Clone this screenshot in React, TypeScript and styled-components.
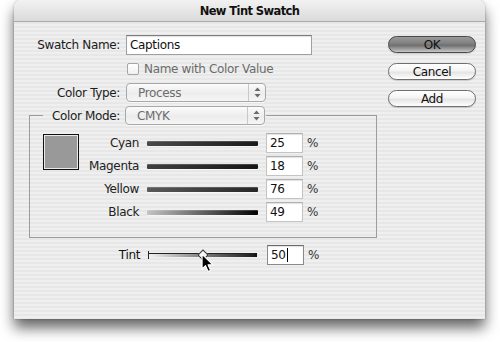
import * as React from 'react';
import styled, { createGlobalStyle } from 'styled-components';

const GlobalStyle = createGlobalStyle`
	html, body {
		margin: 0;
		padding: 0;
		background: #fff;
	}
	body {
		font-family: "DejaVu Sans", "Liberation Sans", sans-serif;
		font-size: 12px;
		letter-spacing: -0.35px;
		color: #1c1c1c;
	}
`;

interface IInk {
	$ink: number;
}

const inks = [
	{ name: 'Cyan', value: 25, from: '#4a4a4a', to: '#1a1a1a' },
	{ name: 'Magenta', value: 18, from: '#404040', to: '#161616' },
	{ name: 'Yellow', value: 76, from: '#5a5a5a', to: '#262626' },
	{ name: 'Black', value: 49, from: '#c4c4c4', to: '#000' },
];

export default function App() {
	const tint = 50;

	return (
		<Page>
			<GlobalStyle />
			<Window>
				<TitleBar>New Tint Swatch</TitleBar>
				<Body>
					<Form>
						<TopGrid>
							<Label>Swatch Name:</Label>
							<TextField>Captions</TextField>
							<span />
							<CheckRow>
								<CheckBox />
								<Dim>Name with Color Value</Dim>
							</CheckRow>
							<Label>Color Type:</Label>
							<Popup>
								<PopupText>Process</PopupText>
								<Stepper><Arrows /></Stepper>
							</Popup>
						</TopGrid>
						<Group>
							<Legend>
								<LegendLabel>Color Mode:</LegendLabel>
								<Popup>
									<PopupText>CMYK</PopupText>
									<Stepper><Arrows /></Stepper>
								</Popup>
							</Legend>
							<GroupInner>
								<Swatch />
								<SliderGrid>
									{inks.map((ink, i) => (
										<React.Fragment key={ink.name}>
											<RowLabel>{ink.name}</RowLabel>
											<InkTrack $from={ink.from} $to={ink.to} $ink={i} />
											<NumField>{ink.value}</NumField>
											<Percent>%</Percent>
										</React.Fragment>
									))}
								</SliderGrid>
							</GroupInner>
						</Group>
						<TintGrid>
							<RowLabel>Tint</RowLabel>
							<TintTrackWrap>
								<TintTrack />
								<Thumb style={{ left: `${tint}%` }} />
								<Cursor style={{ left: `${tint}%` }} viewBox="0 0 12 18" width="13" height="20">
									<path d="M1 1 L1 14.5 L4.2 11.4 L6.6 16.8 L8.8 15.8 L6.5 10.6 L10.8 10.6 Z" fill="#000" stroke="#fff" strokeWidth="1" strokeLinejoin="round" />
								</Cursor>
							</TintTrackWrap>
							<NumField $active>{tint}<Caret /></NumField>
							<Percent>%</Percent>
						</TintGrid>
					</Form>
					<Buttons>
						<PushButton $default>OK</PushButton>
						<PushButton>Cancel</PushButton>
						<PushButton>Add</PushButton>
					</Buttons>
				</Body>
			</Window>
		</Page>
	);
}

function Arrows() {
	return (
		<svg width="7" height="11" viewBox="0 0 7 11">
			<path d="M3.5 0.5 L6.5 4 L0.5 4 Z" fill="#6a6a6a" />
			<path d="M3.5 10.5 L6.5 7 L0.5 7 Z" fill="#6a6a6a" />
		</svg>
	);
}

const Page = styled.div`
	width: 500px;
	height: 342px;
	overflow: hidden;
	padding-left: 14px;
	box-sizing: border-box;
`;
const Window = styled.div`
	width: 471px;
	height: 319px;
	display: flex;
	flex-direction: column;
	border-radius: 7px 7px 0 0;
	overflow: hidden;
	background: repeating-linear-gradient(to bottom, #efefef 0, #efefef 2px, #e7e7e7 2px, #e7e7e7 4px);
	box-shadow: 0 9px 14px rgba(0, 0, 0, 0.6), 0 0 2px rgba(0, 0, 0, 0.35);
`;
const TitleBar = styled.div`
	height: 21px;
	flex: none;
	display: flex;
	align-items: center;
	justify-content: center;
	font-weight: bold;
	font-size: 11.5px;
	letter-spacing: -0.6px;
	color: #111;
	background: linear-gradient(to bottom, #f2f2f2, #dadada);
	border-bottom: 1px solid #a9a9a9;
`;
const Body = styled.div`
	display: flex;
	padding-top: 13px;
`;
const Form = styled.div`
	width: 363px;
	display: flex;
	flex-direction: column;
`;
const TopGrid = styled.div`
	display: grid;
	grid-template-columns: 106px auto;
	grid-template-rows: 20px 14px 19px;
	column-gap: 6px;
	row-gap: 7px;
	align-items: center;
`;
const Label = styled.span`
	text-align: right;
	white-space: nowrap;
	color: #1c1c1c;
`;
const Dim = styled.span`
	color: #6c6c6c;
	white-space: nowrap;
`;
const Field = styled.div`
	box-sizing: border-box;
	height: 20px;
	display: flex;
	align-items: center;
	background: #fff;
	border: 1px solid #a0a0a0;
	border-top-color: #7c7c7c;
	box-shadow: inset 0 1px 1px rgba(0, 0, 0, 0.12);
	color: #111;
`;
const TextField = styled(Field)`
	width: 186px;
	padding-left: 3px;
`;
const NumField = styled(Field)<{ $active?: boolean }>`
	width: 37px;
	padding-left: 3px;
	border-color: ${p => p.$active ? '#8a8a8a' : '#c4c4c4'};
	border-top-color: ${p => p.$active ? '#6a6a6a' : '#b0b0b0'};
`;
const Caret = styled.span`
	display: inline-block;
	width: 1px;
	height: 14px;
	margin-left: 1px;
	background: #000;
`;
const CheckRow = styled.div`
	display: flex;
	align-items: center;
	gap: 5px;
	padding-left: 1px;
`;
const CheckBox = styled.div`
	width: 12px;
	height: 12px;
	box-sizing: border-box;
	border: 1px solid #a6a6a6;
	border-radius: 2px;
	background: linear-gradient(to bottom, #fff, #f0f0f0);
`;
const Popup = styled.div`
	width: 140px;
	height: 19px;
	box-sizing: border-box;
	display: flex;
	align-items: stretch;
	border: 1px solid #a8a8a8;
	border-radius: 4px;
	background: linear-gradient(to bottom, #fbfbfb, #ececec 55%, #f6f6f6);
	box-shadow: 0 1px 0 rgba(255, 255, 255, 0.7);
`;
const PopupText = styled.span`
	flex: 1;
	display: flex;
	align-items: center;
	padding-left: 11px;
	color: #6c6c6c;
`;
const Stepper = styled.span`
	width: 16px;
	display: flex;
	align-items: center;
	justify-content: center;
	border-left: 1px solid #c8c8c8;
`;
const Group = styled.fieldset`
	margin: 4px 0 0 15px;
	padding: 0;
	width: 348px;
	box-sizing: border-box;
	min-width: 0;
	border: 1px solid #9c9c9c;
`;
const Legend = styled.legend`
	margin-left: 13px;
	padding: 0 1px 0 4px;
	display: flex;
	align-items: center;
	gap: 5px;
`;
const LegendLabel = styled(Label)`
	width: 73px;
`;
const GroupInner = styled.div`
	display: flex;
	padding: 8px 0 15px 13px;
`;
const Swatch = styled.div`
	width: 36px;
	height: 36px;
	box-sizing: border-box;
	margin-top: 1px;
	border: 1px solid #111;
	box-shadow: inset 0 0 0 1px #e8e8e8;
	background: #999;
`;
const SliderGrid = styled.div`
	display: grid;
	grid-template-columns: 60px 111px 37px auto;
	grid-auto-rows: 20px;
	column-gap: 8px;
	row-gap: 3px;
	align-items: center;
`;
const RowLabel = styled(Label)`
	color: #222;
`;
const Percent = styled.span`
	margin-left: -4px;
	color: #333;
`;
const InkTrack = styled.div<IInk & { $from: string; $to: string }>`
	height: 5px;
	border-radius: 1px;
	background: linear-gradient(to right, ${p => p.$from}, ${p => p.$to});
	box-shadow: inset 0 1px 0 rgba(255, 255, 255, 0.18), 0 1px 0 rgba(255, 255, 255, 0.6);
`;
const TintGrid = styled.div`
	display: grid;
	grid-template-columns: 61px 111px 37px auto;
	grid-auto-rows: 20px;
	column-gap: 8px;
	align-items: center;
	margin: 7px 0 0 65px;
	${RowLabel} {
		color: #111;
	}
`;
const TintTrackWrap = styled.div`
	position: relative;
	width: 107px;
	height: 8px;
	display: flex;
	align-items: center;
	&:before {
		content: '';
		position: absolute;
		left: 0;
		top: 0;
		width: 1px;
		height: 8px;
		background: #222;
	}
`;
const TintTrack = styled.div`
	flex: 1;
	height: 3px;
	border-top: 1px solid #222;
	background: linear-gradient(to right, #f4f4f4, #8a8a8a 45%, #1a1a1a);
	box-shadow: 2px 0 0 #111;
`;
const Thumb = styled.div`
	position: absolute;
	top: 0;
	width: 6px;
	height: 6px;
	margin-left: -3px;
	transform: rotate(45deg);
	background: #f4f4f4;
	border: 1px solid #333;
`;
const Cursor = styled.svg`
	position: absolute;
	top: 2px;
	margin-left: -1px;
	overflow: visible;
`;
const Buttons = styled.div`
	display: flex;
	flex-direction: column;
	gap: 10px;
	margin-left: 11px;
	padding-top: 1px;
`;
const PushButton = styled.button<{ $default?: boolean }>`
	width: 88px;
	height: 17px;
	padding: 0;
	box-sizing: border-box;
	border-radius: 9px;
	font-family: inherit;
	font-size: 12px;
	letter-spacing: -0.35px;
	color: #111;
	line-height: 1;
	border: 1px solid ${p => p.$default ? '#4a4a4a' : '#6e6e6e'};
	background: ${p => p.$default
		? 'linear-gradient(to bottom, #9a9a9a 0%, #7e7e7e 45%, #6e6e6e 55%, #a8a8a8 85%, #c8c8c8 100%)'
		: 'linear-gradient(to bottom, #ffffff 0%, #f4f4f4 45%, #e4e4e4 55%, #f6f6f6 85%, #ffffff 100%)'};
	box-shadow: 0 1px 1px rgba(0, 0, 0, 0.15);
`;
